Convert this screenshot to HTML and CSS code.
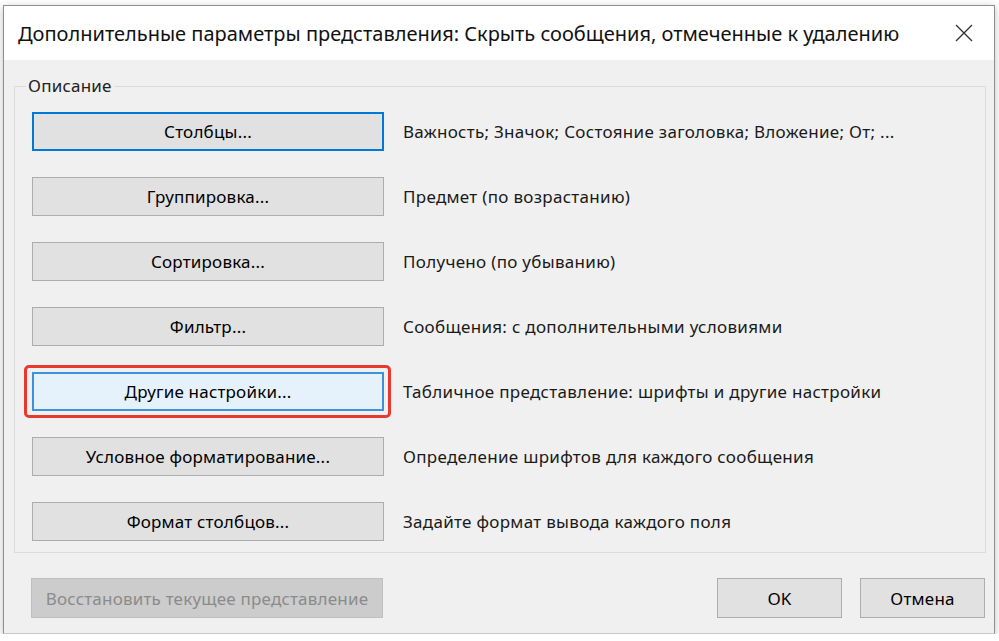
FILE: index.html
```html
<!DOCTYPE html>
<html lang="ru">
<head>
  <meta charset="UTF-8" />
  <title>Дополнительные параметры представления</title>
  <link rel="stylesheet" href="styles.css">
</head>
<body>

  <div class="dialog">

    <!-- Заголовок окна -->
    <div class="titlebar">
      <span class="title">Дополнительные параметры представления: Скрыть сообщения, отмеченные к удалению</span>
      <svg class="close" width="18" height="18" viewBox="0 0 18 18">
        <path d="M1 1 L17 17 M17 1 L1 17" stroke="#333" stroke-width="1.3" fill="none" />
      </svg>
    </div>

    <div class="content">
      <fieldset class="group">
        <legend>Описание</legend>

        <div class="row">
          <button class="btn default">Столбцы...</button>
          <span class="desc">Важность; Значок; Состояние заголовка; Вложение; От; ...</span>
        </div>
        <div class="row">
          <button class="btn">Группировка...</button>
          <span class="desc">Предмет (по возрастанию)</span>
        </div>
        <div class="row">
          <button class="btn">Сортировка...</button>
          <span class="desc">Получено (по убыванию)</span>
        </div>
        <div class="row">
          <button class="btn">Фильтр...</button>
          <span class="desc">Сообщения: с дополнительными условиями</span>
        </div>
        <div class="row">
          <div class="highlight">
            <button class="btn hover">Другие настройки...</button>
          </div>
          <span class="desc">Табличное представление: шрифты и другие настройки</span>
        </div>
        <div class="row">
          <button class="btn">Условное форматирование...</button>
          <span class="desc">Определение шрифтов для каждого сообщения</span>
        </div>
        <div class="row">
          <button class="btn">Формат столбцов...</button>
          <span class="desc">Задайте формат вывода каждого поля</span>
        </div>
      </fieldset>

      <!-- Кнопки внизу -->
      <div class="footer">
        <button class="btn disabled">Восстановить текущее представление</button>
        <div class="footer-right">
          <button class="btn small">OK</button>
          <button class="btn small">Отмена</button>
        </div>
      </div>
    </div>

  </div>

</body>
</html>
```

FILE: styles.css
```css
body {
  margin: 0;
  padding: 5px 0 0 3px;
  background: #ffffff;
  font-family: "Noto Sans", "Open Sans", sans-serif;
  color: #1a1a1a;
}

.dialog {
  width: 990px;
  height: 627px;
  border: 1px solid #8f8f8f;
  border-bottom-color: #c8c8c8;
  background: #f0f0f0;
  box-shadow: 0 2px 8px rgba(0,0,0,0.25);
  display: flex;
  flex-direction: column;
}

.titlebar {
  background: white;
  height: 54px;
  display: flex;
  justify-content: space-between;
  align-items: center;
  padding: 0 21px 0 14px;
  flex-shrink: 0;
}

.title {
  font-size: 20px;
  color: #111;
}

.close {
  display: block;
}

.content {
  padding: 15px 8px 0 10px;
}

.group {
  margin: 0;
  border: 1px solid #dcdcdc;
  padding: 15px 10px 11px 17px;
}

.group legend {
  font-size: 17px;
  letter-spacing: 0.2px;
  color: #222;
  padding: 0 2px;
  margin-left: -6px;
  line-height: 22px;
}

.row {
  display: flex;
  align-items: center;
  margin-bottom: 26px;
  height: 39px;
}

.row:last-child {
  margin-bottom: 0;
}

.btn {
  font-family: "Noto Sans", "Open Sans", sans-serif;
  font-size: 17px;
  letter-spacing: 0.2px;
  color: #000;
  background: #e1e1e1;
  border: 1px solid #adadad;
  width: 352px;
  height: 39px;
  padding: 0;
  box-sizing: border-box;
  cursor: pointer;
}

.btn.default {
  border: 2px solid #0078d7;
}

.btn.hover {
  background: #e5f1fb;
  border: 2px solid #3c92dc;
}

.highlight {
  margin: -7px -7px -7px -8px;
  padding: 4px 4px 4px 5px;
  border: 3px solid #e8392e;
  border-radius: 5px;
  display: flex;
}

.desc {
  font-size: 17px;
  letter-spacing: 0.3px;
  margin-left: 19px;
  color: #1a1a1a;
}

.footer {
  display: flex;
  justify-content: space-between;
  margin-top: 25px;
}

.footer .btn {
  height: 40px;
}

.btn.disabled {
  background: #cccccc;
  border-color: #bfbfbf;
  color: #8b8b8b;
  margin-left: 17px;
  cursor: default;
}

.footer-right {
  display: flex;
  gap: 18px;
  margin-right: 1px;
}

.btn.small {
  width: 125px;
}
```
